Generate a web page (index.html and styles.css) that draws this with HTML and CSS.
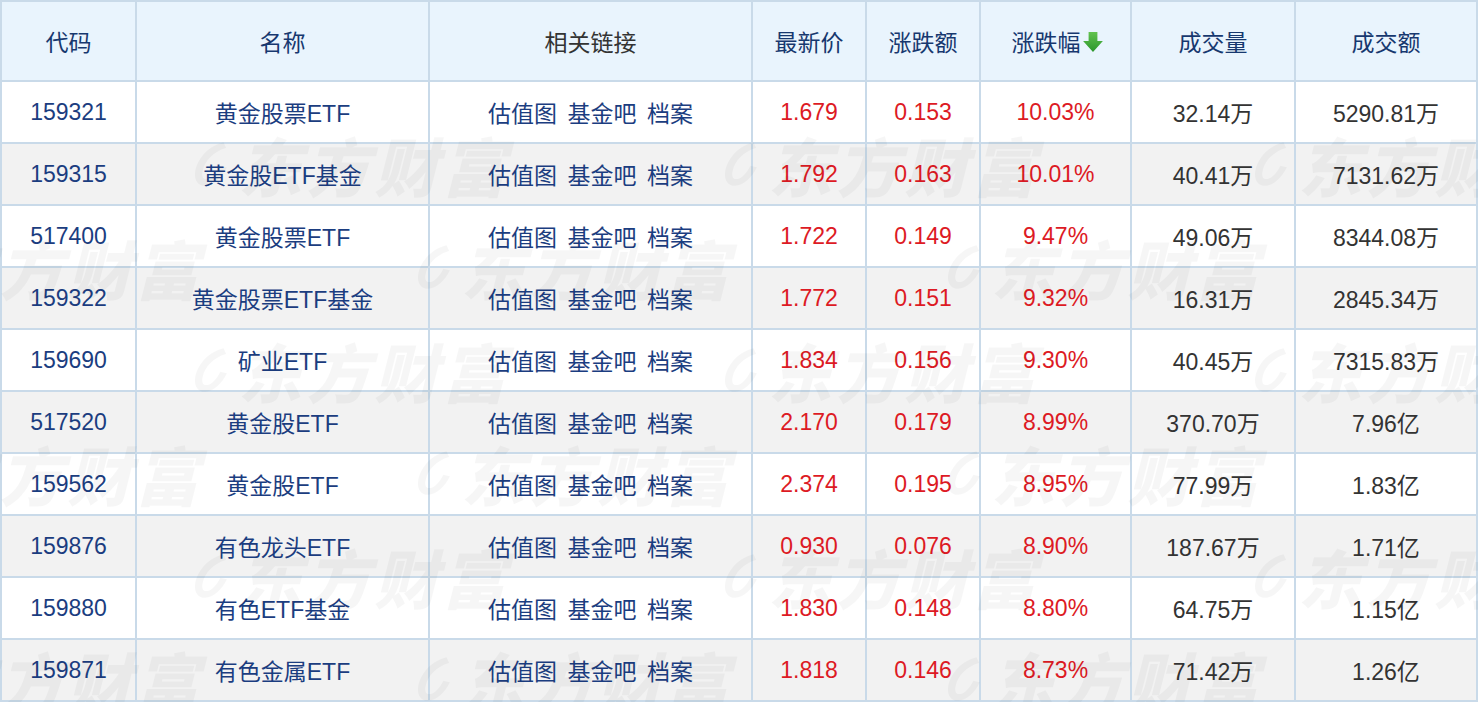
FILE: index.html
```html
<!DOCTYPE html>
<html lang="zh-CN">
<head>
<meta charset="utf-8">
<title>ETF 涨幅榜</title>
<link rel="stylesheet" href="styles.css">
</head>
<body>
<div class="board">
  <table class="quotes">
    <colgroup>
      <col class="c-code"><col class="c-name"><col class="c-links"><col class="c-price"><col class="c-chg"><col class="c-pct"><col class="c-vol"><col class="c-amt">
    </colgroup>
    <thead>
      <tr>
        <th>代码</th>
        <th>名称</th>
        <th class="plain">相关链接</th>
        <th>最新价</th>
        <th>涨跌额</th>
        <th><span class="sort">涨跌幅<svg class="arrow" viewBox="0 0 20 20" width="22" height="22"><defs><linearGradient id="g" x1="0" y1="0" x2="0" y2="1"><stop offset="0" stop-color="#62c24f"/><stop offset="1" stop-color="#2b962c"/></linearGradient></defs><path d="M6 1h8v8h5l-9 10L1 9h5z" fill="url(#g)"/></svg></span></th>
        <th>成交量</th>
        <th>成交额</th>
      </tr>
    </thead>
    <tbody>
      <tr><td class="code">159321</td><td class="name">黄金股票ETF</td><td class="links">估值图 基金吧 档案</td><td class="up">1.679</td><td class="up">0.153</td><td class="up">10.03%</td><td class="num">32.14万</td><td class="num">5290.81万</td></tr>
      <tr><td class="code">159315</td><td class="name">黄金股ETF基金</td><td class="links">估值图 基金吧 档案</td><td class="up">1.792</td><td class="up">0.163</td><td class="up">10.01%</td><td class="num">40.41万</td><td class="num">7131.62万</td></tr>
      <tr><td class="code">517400</td><td class="name">黄金股票ETF</td><td class="links">估值图 基金吧 档案</td><td class="up">1.722</td><td class="up">0.149</td><td class="up">9.47%</td><td class="num">49.06万</td><td class="num">8344.08万</td></tr>
      <tr><td class="code">159322</td><td class="name">黄金股票ETF基金</td><td class="links">估值图 基金吧 档案</td><td class="up">1.772</td><td class="up">0.151</td><td class="up">9.32%</td><td class="num">16.31万</td><td class="num">2845.34万</td></tr>
      <tr><td class="code">159690</td><td class="name">矿业ETF</td><td class="links">估值图 基金吧 档案</td><td class="up">1.834</td><td class="up">0.156</td><td class="up">9.30%</td><td class="num">40.45万</td><td class="num">7315.83万</td></tr>
      <tr><td class="code">517520</td><td class="name">黄金股ETF</td><td class="links">估值图 基金吧 档案</td><td class="up">2.170</td><td class="up">0.179</td><td class="up">8.99%</td><td class="num">370.70万</td><td class="num">7.96亿</td></tr>
      <tr><td class="code">159562</td><td class="name">黄金股ETF</td><td class="links">估值图 基金吧 档案</td><td class="up">2.374</td><td class="up">0.195</td><td class="up">8.95%</td><td class="num">77.99万</td><td class="num">1.83亿</td></tr>
      <tr><td class="code">159876</td><td class="name">有色龙头ETF</td><td class="links">估值图 基金吧 档案</td><td class="up">0.930</td><td class="up">0.076</td><td class="up">8.90%</td><td class="num">187.67万</td><td class="num">1.71亿</td></tr>
      <tr><td class="code">159880</td><td class="name">有色ETF基金</td><td class="links">估值图 基金吧 档案</td><td class="up">1.830</td><td class="up">0.148</td><td class="up">8.80%</td><td class="num">64.75万</td><td class="num">1.15亿</td></tr>
      <tr><td class="code">159871</td><td class="name">有色金属ETF</td><td class="links">估值图 基金吧 档案</td><td class="up">1.818</td><td class="up">0.146</td><td class="up">8.73%</td><td class="num">71.42万</td><td class="num">1.26亿</td></tr>
    </tbody>
  </table>
  <div class="watermark" aria-hidden="true">
    <div class="wm-row wm-a"><span class="wm"><svg class="wm-logo" viewBox="0 0 50 60"><path d="M40 4C22 8 8 24 6 40c-1 10 4 16 12 16 10 0 20-10 26-22l-8-2c-4 9-11 16-17 16-4 0-5-4-4-9 2-12 13-24 28-28z" /></svg>东方财富</span><span class="wm"><svg class="wm-logo" viewBox="0 0 50 60"><path d="M40 4C22 8 8 24 6 40c-1 10 4 16 12 16 10 0 20-10 26-22l-8-2c-4 9-11 16-17 16-4 0-5-4-4-9 2-12 13-24 28-28z" /></svg>东方财富</span><span class="wm"><svg class="wm-logo" viewBox="0 0 50 60"><path d="M40 4C22 8 8 24 6 40c-1 10 4 16 12 16 10 0 20-10 26-22l-8-2c-4 9-11 16-17 16-4 0-5-4-4-9 2-12 13-24 28-28z" /></svg>东方财富</span></div>
    <div class="wm-row wm-b"><span class="wm"><svg class="wm-logo" viewBox="0 0 50 60"><path d="M40 4C22 8 8 24 6 40c-1 10 4 16 12 16 10 0 20-10 26-22l-8-2c-4 9-11 16-17 16-4 0-5-4-4-9 2-12 13-24 28-28z" /></svg>东方财富</span><span class="wm"><svg class="wm-logo" viewBox="0 0 50 60"><path d="M40 4C22 8 8 24 6 40c-1 10 4 16 12 16 10 0 20-10 26-22l-8-2c-4 9-11 16-17 16-4 0-5-4-4-9 2-12 13-24 28-28z" /></svg>东方财富</span><span class="wm"><svg class="wm-logo" viewBox="0 0 50 60"><path d="M40 4C22 8 8 24 6 40c-1 10 4 16 12 16 10 0 20-10 26-22l-8-2c-4 9-11 16-17 16-4 0-5-4-4-9 2-12 13-24 28-28z" /></svg>东方财富</span><span class="wm"><svg class="wm-logo" viewBox="0 0 50 60"><path d="M40 4C22 8 8 24 6 40c-1 10 4 16 12 16 10 0 20-10 26-22l-8-2c-4 9-11 16-17 16-4 0-5-4-4-9 2-12 13-24 28-28z" /></svg>东方财富</span></div>
    <div class="wm-row wm-a"><span class="wm"><svg class="wm-logo" viewBox="0 0 50 60"><path d="M40 4C22 8 8 24 6 40c-1 10 4 16 12 16 10 0 20-10 26-22l-8-2c-4 9-11 16-17 16-4 0-5-4-4-9 2-12 13-24 28-28z" /></svg>东方财富</span><span class="wm"><svg class="wm-logo" viewBox="0 0 50 60"><path d="M40 4C22 8 8 24 6 40c-1 10 4 16 12 16 10 0 20-10 26-22l-8-2c-4 9-11 16-17 16-4 0-5-4-4-9 2-12 13-24 28-28z" /></svg>东方财富</span><span class="wm"><svg class="wm-logo" viewBox="0 0 50 60"><path d="M40 4C22 8 8 24 6 40c-1 10 4 16 12 16 10 0 20-10 26-22l-8-2c-4 9-11 16-17 16-4 0-5-4-4-9 2-12 13-24 28-28z" /></svg>东方财富</span></div>
    <div class="wm-row wm-b"><span class="wm"><svg class="wm-logo" viewBox="0 0 50 60"><path d="M40 4C22 8 8 24 6 40c-1 10 4 16 12 16 10 0 20-10 26-22l-8-2c-4 9-11 16-17 16-4 0-5-4-4-9 2-12 13-24 28-28z" /></svg>东方财富</span><span class="wm"><svg class="wm-logo" viewBox="0 0 50 60"><path d="M40 4C22 8 8 24 6 40c-1 10 4 16 12 16 10 0 20-10 26-22l-8-2c-4 9-11 16-17 16-4 0-5-4-4-9 2-12 13-24 28-28z" /></svg>东方财富</span><span class="wm"><svg class="wm-logo" viewBox="0 0 50 60"><path d="M40 4C22 8 8 24 6 40c-1 10 4 16 12 16 10 0 20-10 26-22l-8-2c-4 9-11 16-17 16-4 0-5-4-4-9 2-12 13-24 28-28z" /></svg>东方财富</span><span class="wm"><svg class="wm-logo" viewBox="0 0 50 60"><path d="M40 4C22 8 8 24 6 40c-1 10 4 16 12 16 10 0 20-10 26-22l-8-2c-4 9-11 16-17 16-4 0-5-4-4-9 2-12 13-24 28-28z" /></svg>东方财富</span></div>
    <div class="wm-row wm-a"><span class="wm"><svg class="wm-logo" viewBox="0 0 50 60"><path d="M40 4C22 8 8 24 6 40c-1 10 4 16 12 16 10 0 20-10 26-22l-8-2c-4 9-11 16-17 16-4 0-5-4-4-9 2-12 13-24 28-28z" /></svg>东方财富</span><span class="wm"><svg class="wm-logo" viewBox="0 0 50 60"><path d="M40 4C22 8 8 24 6 40c-1 10 4 16 12 16 10 0 20-10 26-22l-8-2c-4 9-11 16-17 16-4 0-5-4-4-9 2-12 13-24 28-28z" /></svg>东方财富</span><span class="wm"><svg class="wm-logo" viewBox="0 0 50 60"><path d="M40 4C22 8 8 24 6 40c-1 10 4 16 12 16 10 0 20-10 26-22l-8-2c-4 9-11 16-17 16-4 0-5-4-4-9 2-12 13-24 28-28z" /></svg>东方财富</span></div>
    <div class="wm-row wm-b"><span class="wm"><svg class="wm-logo" viewBox="0 0 50 60"><path d="M40 4C22 8 8 24 6 40c-1 10 4 16 12 16 10 0 20-10 26-22l-8-2c-4 9-11 16-17 16-4 0-5-4-4-9 2-12 13-24 28-28z" /></svg>东方财富</span><span class="wm"><svg class="wm-logo" viewBox="0 0 50 60"><path d="M40 4C22 8 8 24 6 40c-1 10 4 16 12 16 10 0 20-10 26-22l-8-2c-4 9-11 16-17 16-4 0-5-4-4-9 2-12 13-24 28-28z" /></svg>东方财富</span><span class="wm"><svg class="wm-logo" viewBox="0 0 50 60"><path d="M40 4C22 8 8 24 6 40c-1 10 4 16 12 16 10 0 20-10 26-22l-8-2c-4 9-11 16-17 16-4 0-5-4-4-9 2-12 13-24 28-28z" /></svg>东方财富</span><span class="wm"><svg class="wm-logo" viewBox="0 0 50 60"><path d="M40 4C22 8 8 24 6 40c-1 10 4 16 12 16 10 0 20-10 26-22l-8-2c-4 9-11 16-17 16-4 0-5-4-4-9 2-12 13-24 28-28z" /></svg>东方财富</span></div>
  </div>
</div>
</body>
</html>
```

FILE: styles.css
```css
html, body {
  margin: 0;
  padding: 0;
  background: #ffffff;
}

body {
  font-family: "Liberation Sans", "Noto Sans CJK SC", sans-serif;
  overflow: hidden;
}

.board {
  position: relative;
  width: 1478px;
  height: 702px;
  overflow: hidden;
}

.quotes {
  border-collapse: collapse;
  table-layout: fixed;
  width: 1478px;
  font-size: 23px;
}

.c-code { width: 135px; }
.c-name { width: 293px; }
.c-links { width: 323px; }
.c-price { width: 114px; }
.c-chg { width: 114px; }
.c-pct { width: 151px; }
.c-vol { width: 164px; }
.c-amt { width: 182px; }

.quotes th,
.quotes td {
  border: 2px solid #c9dae9;
  padding: 0;
  text-align: center;
  white-space: nowrap;
  font-weight: normal;
}

.quotes th {
  height: 78px;
  background: #e9f4fd;
  color: #17386f;
}

.quotes th.plain {
  color: #333333;
}

.sort {
  display: inline-flex;
  align-items: center;
  padding-left: 4px;
}

.arrow {
  margin-left: 1px;
  margin-top: 2px;
}

.quotes td {
  height: 60px;
}

.quotes tbody tr:nth-child(odd) td {
  background: #ffffff;
}

.quotes tbody tr:nth-child(even) td {
  background: #f2f2f2;
}

.code,
.name,
.links {
  color: #1b3d80;
}

.links {
  word-spacing: 4px;
}

.up {
  color: #dd1a24;
}

.num {
  color: #333333;
}

.watermark {
  position: absolute;
  top: 82px;
  left: 0;
  right: 0;
  bottom: 0;
  overflow: hidden;
  pointer-events: none;
  display: flex;
  flex-direction: column;
  padding-top: 30px;
}

.wm-row {
  display: flex;
  gap: 200px;
  height: 103px;
  flex: none;
  white-space: nowrap;
}

.wm-a { margin-left: 190px; }
.wm-b { margin-left: -117px; }

.wm {
  flex: none;
  width: 330px;
  display: flex;
  align-items: center;
  font-family: "Noto Sans CJK SC", sans-serif;
  font-weight: 900;
  font-style: italic;
  font-size: 64px;
  line-height: 76px;
  letter-spacing: 4px;
  color: rgba(0, 0, 0, 0.035);
}

.wm-logo {
  width: 42px;
  height: 56px;
  margin-right: 6px;
  fill: rgba(0, 0, 0, 0.035);
}
```
